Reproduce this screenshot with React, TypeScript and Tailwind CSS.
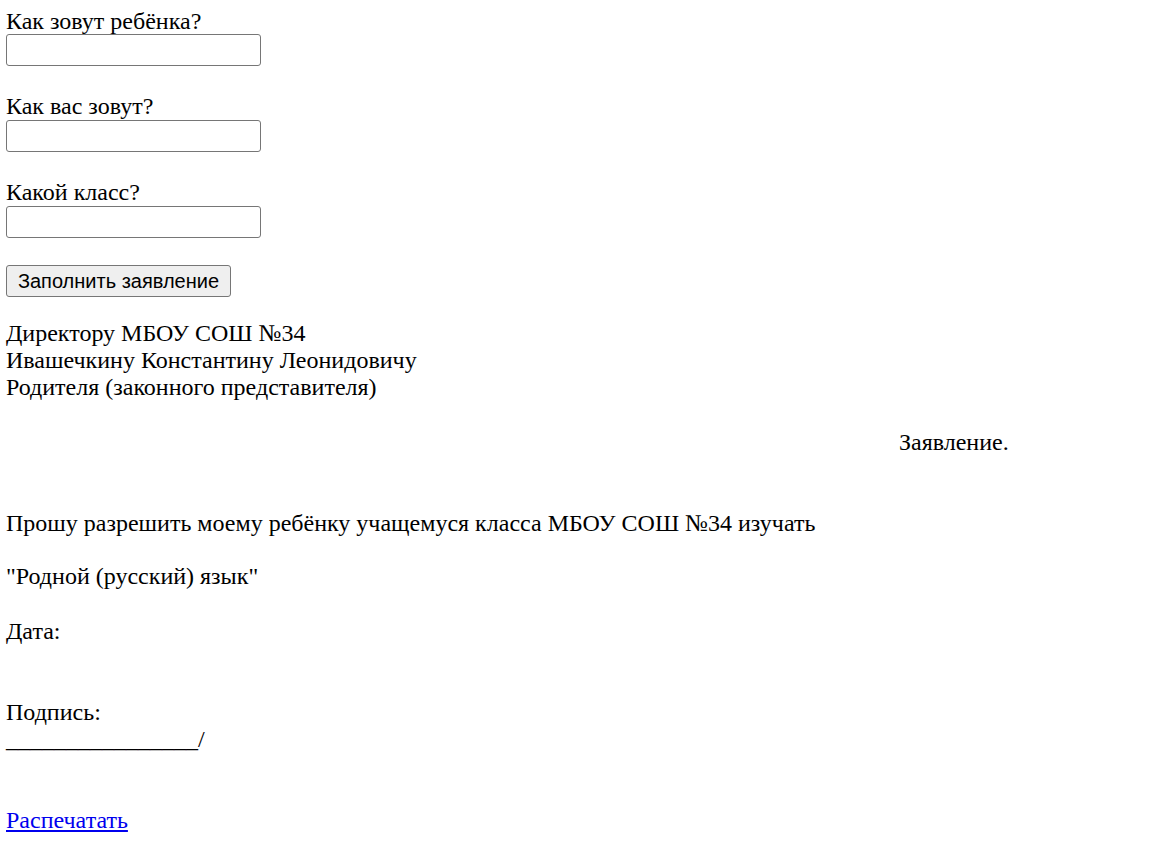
export default function App() {
  const line = "h-[27px] leading-[27px] whitespace-nowrap"
  const input = "block w-[255px] h-[32px] border border-[#767676] rounded-[3px] bg-white"

  return (
    <div className="min-h-[842px] bg-white text-black pl-[6px] flex flex-col items-start text-[24px] font-['Liberation_Serif','Times_New_Roman',serif]">
      {/* form */}
      <div className={`${line} mt-[8px]`}>Как зовут ребёнка?</div>
      <input type="text" className={`${input} -mt-[1px]`} />

      <div className={`${line} mt-[27px]`}>Как вас зовут?</div>
      <input type="text" className={input} />

      <div className={`${line} mt-[27px]`}>Какой класс?</div>
      <input type="text" className={input} />

      <button className="mt-[27px] w-[225px] h-[32px] border border-[#767676] rounded-[3px] bg-[#efefef] text-[20px] leading-none font-['Liberation_Sans',Arial,sans-serif]">
        Заполнить заявление
      </button>

      {/* statement */}
      <div className="mt-[23px]">
        <div className={line}>Директору МБОУ СОШ №34</div>
        <div className={line}>Ивашечкину Константину Леонидовичу</div>
        <div className={line}>Родителя (законного представителя)</div>
      </div>

      <div className={`${line} mt-[28px] ml-[893px]`}>Заявление.</div>

      <div className={`${line} mt-[54px]`}>
        Прошу разрешить моему ребёнку учащемуся класса МБОУ СОШ №34 изучать
      </div>
      <div className={`${line} mt-[26px]`}>"Родной (русский) язык"</div>
      <div className={`${line} mt-[28px]`}>Дата:</div>

      <div className={`${line} mt-[54px]`}>Подпись:</div>
      <div className={line}>________________/</div>

      <a href="#" className={`${line} mt-[54px] text-[#0000ee] underline`}>
        Распечатать
      </a>
    </div>
  )
}
